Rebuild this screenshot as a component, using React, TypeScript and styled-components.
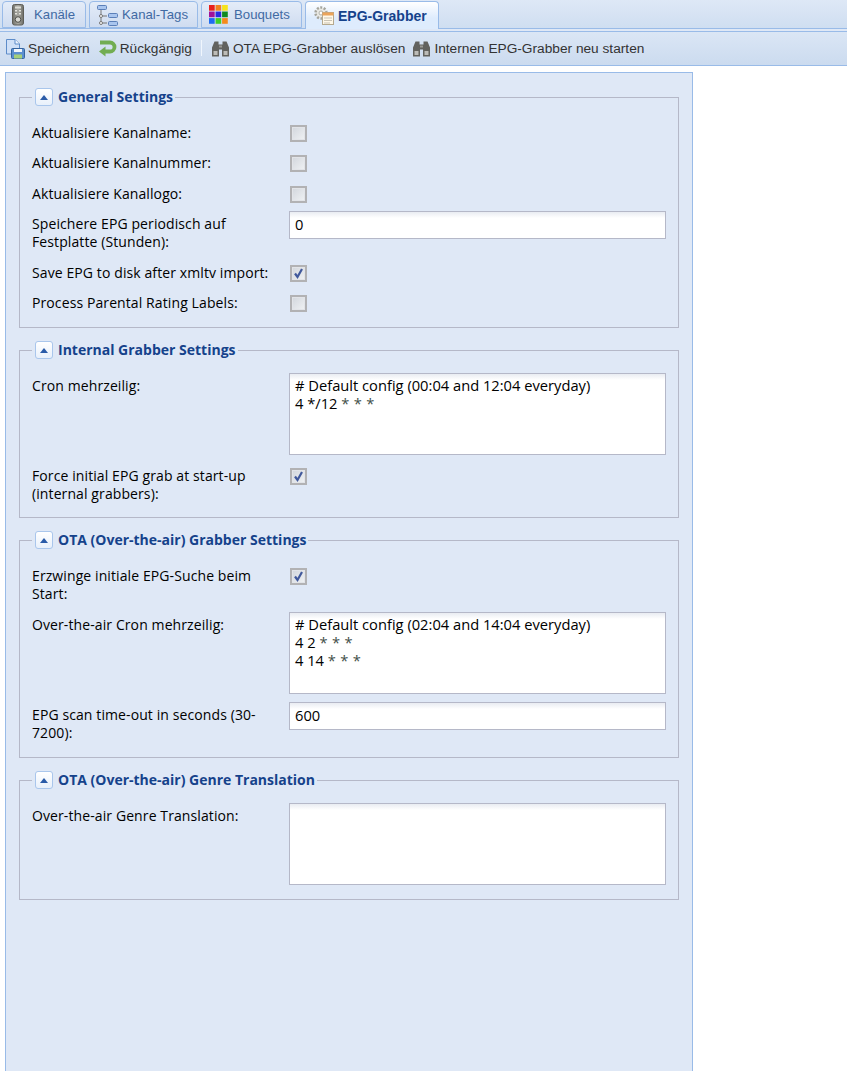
import React from 'react';
import styled, { createGlobalStyle } from 'styled-components';

const Global = createGlobalStyle`
  html, body { margin: 0; padding: 0; background: #fff; }
  body { width: 847px; height: 1071px; overflow: hidden; font-family: "Liberation Sans", Arial, sans-serif; }
`;

const Page = styled.div`
  width: 847px;
  height: 1071px;
  overflow: hidden;
  display: flex;
  flex-direction: column;
`;

const TabBar = styled.div`
  height: 29px;
  box-sizing: border-box;
  padding: 1px 0 0 2px;
  display: flex;
  gap: 3px;
  background: linear-gradient(#dee8f6, #cfdef1);
  border-bottom: 1px solid #99bbe8;
`;

const Tab = styled.div<{ $active?: boolean; $w: number; $gap: number }>`
  width: ${p => p.$w}px;
  height: ${p => (p.$active ? 28 : 27)}px;
  box-sizing: border-box;
  border: 1px solid #99bbe8;
  border-bottom: ${p => (p.$active ? 'none' : '1px solid #99bbe8')};
  border-radius: 4px 4px 0 0;
  background: ${p => (p.$active ? 'linear-gradient(#fff, #deecfd 60%, #deecfd)' : 'linear-gradient(#e4ecf8, #cfdcf0)')};
  display: flex;
  align-items: center;
  gap: ${p => p.$gap}px;
  padding-left: 7px;
  font-size: ${p => (p.$active ? 14 : 13.2)}px;
  font-weight: ${p => (p.$active ? 700 : 400)};
  color: ${p => (p.$active ? '#15428b' : '#416aa3')};
  white-space: nowrap;
`;

const Strip = styled.div`
  height: 2px;
  background: #dfe8f6;
`;

const Toolbar = styled.div`
  height: 35px;
  box-sizing: border-box;
  border-top: 1px solid #99bbe8;
  border-bottom: 1px solid #99bbe8;
  background: linear-gradient(#dbe6f5, #cbdbef);
  display: flex;
  align-items: center;
  padding: 0 0 1px 5px;
  font-size: 13.7px;
  color: #333;
`;

const ToolButton = styled.div<{ $gap?: number }>`
  display: flex;
  align-items: center;
  gap: 3px;
  margin-right: ${p => p.$gap ?? 9}px;
  white-space: nowrap;
`;

const Separator = styled.div`
  width: 1px;
  height: 16px;
  background: #f0f6fd;
  margin-right: 9px;
`;

const Panel = styled.div`
  width: 688px;
  flex: 1;
  margin: 6px 0 0 5px;
  box-sizing: border-box;
  border: 1px solid #99bbe8;
  border-bottom: none;
  background: #dfe8f6;
  padding: 14px 13px 0;
`;

const Fieldset = styled.fieldset`
  margin: 0 0 12px;
  padding: 13px 12px 0 12px;
  border: 1px solid #b5b8c8;
  min-width: 0;
`;

const Legend = styled.legend`
  margin-left: 0;
  padding: 0 2px 0 3px;
  display: flex;
  align-items: center;
  gap: 5px;
  height: 20px;
  font-family: "Open Sans", "Noto Sans", sans-serif;
  font-size: 14px;
  font-weight: 700;
  color: #15428b;
`;

const LegendTitle = styled.span`
  padding-bottom: 2px;
`;

const Toggle = styled.span`
  width: 18px;
  height: 18px;
  box-sizing: border-box;
  border: 1px solid #a9c6ec;
  border-radius: 3px;
  background: linear-gradient(#fff, #e8f0fb);
  display: flex;
  align-items: center;
  justify-content: center;
  &::before {
    content: '';
    border-left: 4.5px solid transparent;
    border-right: 4.5px solid transparent;
    border-bottom: 5px solid #2a5ba8;
  }
`;

const Row = styled.div<{ $mb?: number }>`
  display: grid;
  grid-template-columns: 257px 377px;
  margin-bottom: ${p => p.$mb ?? 7.5}px;
  font-family: "Open Sans", "Noto Sans", sans-serif;
  font-size: 14px;
  line-height: 18px;
  color: #000;
`;

const Label = styled.div`
  padding: 4px 10px 1px 0;
  letter-spacing: 0.1px;
`;

const Check = styled.span`
  display: flex;
  align-items: center;
  justify-content: center;
  width: 17px;
  height: 17px;
  margin: 5px 0 0 1px;
  box-sizing: border-box;
  border: 2px solid #b2b2b4;
  background: linear-gradient(135deg, #d2d6dc, #f0f2f4);
  box-shadow: inset 0 0 0 1px #e2e4e8;
`;

const Field = styled.div<{ $h: number; $single?: boolean }>`
  height: ${p => p.$h}px;
  box-sizing: border-box;
  border: 1px solid #b5b8c8;
  background: linear-gradient(#e9ecf2, #fff 6px);
  padding: ${p => (p.$single ? 3 : 2)}px 5px 2px;
  white-space: pre;
  font-size: 14.7px;
  line-height: 18px;
`;

const Star = styled.span`
  color: #3f4f48;
  letter-spacing: 0.3px;
`;

const RemoteIcon = () => (
  <svg width="16" height="22" viewBox="0 0 16 22">
    <defs>
      <linearGradient id="remote" x1="0" x2="1" y1="0" y2="0">
        <stop offset="0" stopColor="#6e6e68" />
        <stop offset="0.5" stopColor="#a9a9a2" />
        <stop offset="1" stopColor="#6e6e68" />
      </linearGradient>
    </defs>
    <rect x="2.500" y="0.500" width="11" height="20.500" rx="2" fill="url(#remote)" stroke="#5e5e58" />
    <rect x="5" y="2.500" width="6" height="2" fill="#ddddd6" />
    <path d="M5 6h2v1.500H5zM9 6h2v1.500H9zM5 9h2v1.500H5zM9 9h2v1.500H9z" fill="#e4e4dd" />
    <circle cx="8" cy="15.500" r="2.800" fill="#d8d8d2" stroke="#4f4f4a" />
  </svg>
);

const TreeIcon = () => (
  <svg width="21" height="22" viewBox="0 0 21 22">
    <path d="M4 6V19H10M4 12H10" fill="none" stroke="#777" />
    <rect x="0.500" y="1.500" width="9" height="4" rx="1" fill="#a9c5ee" stroke="#5b7fb8" />
    <rect x="11.500" y="9.500" width="9" height="4" rx="1" fill="#a9c5ee" stroke="#5b7fb8" />
    <rect x="11.500" y="17.500" width="9" height="4" rx="1" fill="#a9c5ee" stroke="#5b7fb8" />
    <circle cx="4" cy="12" r="1.500" fill="#fff" stroke="#777" />
    <circle cx="4" cy="19" r="1.500" fill="#fff" stroke="#777" />
  </svg>
);

const BOUQUET_COLORS = ['#e8201c', '#f0821e', '#f5e31a', '#a0129a', '#2a2ce0', '#0f8a20', '#1f6cf0', '#3fd028', '#f58a1c'];

const BouquetIcon = () => (
  <svg width="19" height="19" viewBox="0 0 18 18">
    {BOUQUET_COLORS.map((c, i) => (
      <rect key={c} x={(i % 3) * 6.2} y={Math.floor(i / 3) * 6.2} width="5.400" height="5.400" fill={c} />
    ))}
  </svg>
);

const GearIcon = () => (
  <svg width="22" height="22" viewBox="0 0 22 22">
    <circle cx="8" cy="8" r="5.500" fill="#e9e9e4" stroke="#a5a59d" strokeWidth="2.500" strokeDasharray="2 1.500" />
    <circle cx="8" cy="8" r="2" fill="#fff" stroke="#b0b0a8" />
    <rect x="9.500" y="7.500" width="11" height="12" fill="#fff8e8" stroke="#b5a98e" />
    <rect x="9.500" y="7.500" width="11" height="3" fill="#eba45a" />
    <path d="M11 13h8M11 15.500h8M11 18h6" stroke="#c9c3b5" />
  </svg>
);

const SaveIcon = () => (
  <svg width="20" height="21" viewBox="0 0 20 21">
    <path d="M1.500 1.500H10L14.500 6V16H1.500Z" fill="#cfe0f7" stroke="#5d8cc9" />
    <path d="M10 1.500V6H14.500" fill="#eef5ff" stroke="#5d8cc9" />
    <rect x="6.500" y="10.500" width="13" height="10" rx="1" fill="#5b8fd0" stroke="#35649f" />
    <rect x="9" y="11" width="8" height="3" fill="#f0f5fb" />
    <rect x="9" y="16.500" width="8" height="4" fill="#a6d07a" />
  </svg>
);

const UndoIcon = () => (
  <svg width="19" height="18" viewBox="0 0 19 18">
    <path d="M2 3.500H12A4.500 4.500 0 0 1 12 12.500H6" fill="none" stroke="#72ad52" strokeWidth="3.800" />
    <path d="M7.500 7.500V17.500L1 12.500Z" fill="#72ad52" />
  </svg>
);

const BinocularIcon = () => (
  <svg width="19" height="17" viewBox="0 0 19 17">
    <path d="M3.500 1.500h4v3h4v-3h4l2.500 6v9h-7v-7H8v7H1v-9Z" fill="#62625e" />
    <rect x="2.500" y="11" width="4" height="4" fill="#bcbcb8" />
    <rect x="12.500" y="11" width="4" height="4" fill="#bcbcb8" />
    <rect x="8" y="5.500" width="3" height="2" fill="#9a9a95" />
  </svg>
);

const CheckMark = () => (
  <svg width="13" height="13" viewBox="0 0 13 13">
    <path d="M3 6.500L5.500 10L10 2" fill="none" stroke="#41599c" strokeWidth="2.200" />
  </svg>
);

const Box = ({ checked }: { checked?: boolean }) => <Check>{checked && <CheckMark />}</Check>;

const Stars = () => <Star>* * *</Star>;

export default function App() {
  return (
    <Page>
      <Global />
      <TabBar>
        <Tab $w={84} $gap={8}><RemoteIcon />Kanäle</Tab>
        <Tab $w={109} $gap={4}><TreeIcon />Kanal-Tags</Tab>
        <Tab $w={101} $gap={6}><BouquetIcon />Bouquets</Tab>
        <Tab $w={134} $gap={3} $active><GearIcon />EPG-Grabber</Tab>
      </TabBar>
      <Strip />
      <Toolbar>
        <ToolButton $gap={8}><SaveIcon />Speichern</ToolButton>
        <ToolButton><UndoIcon />Rückgängig</ToolButton>
        <Separator />
        <ToolButton $gap={7}><BinocularIcon />OTA EPG-Grabber auslösen</ToolButton>
        <ToolButton><BinocularIcon />Internen EPG-Grabber neu starten</ToolButton>
      </Toolbar>
      <Panel>
        <Fieldset>
          <Legend><Toggle /><LegendTitle>General Settings</LegendTitle></Legend>
          <Row $mb={7}><Label>Aktualisiere Kanalname:</Label><Box /></Row>
          <Row><Label>Aktualisiere Kanalnummer:</Label><Box /></Row>
          <Row><Label>Aktualisiere Kanallogo:</Label><Box /></Row>
          <Row><Label>Speichere EPG periodisch auf Festplatte (Stunden):</Label><Field $h={28} $single>0</Field></Row>
          <Row><Label>Save EPG to disk after xmltv import:</Label><Box checked /></Row>
          <Row $mb={14}><Label>Process Parental Rating Labels:</Label><Box /></Row>
        </Fieldset>
        <Fieldset>
          <Legend><Toggle /><LegendTitle>Internal Grabber Settings</LegendTitle></Legend>
          <Row $mb={8}>
            <Label>Cron mehrzeilig:</Label>
            <Field $h={82}>
              <div># Default config (00:04 and 12:04 everyday)</div>
              <div>4 */12 <Stars /></div>
            </Field>
          </Row>
          <Row $mb={13}><Label>Force initial EPG grab at start-up (internal grabbers):</Label><Box checked /></Row>
        </Fieldset>
        <Fieldset>
          <Legend><Toggle /><LegendTitle>OTA (Over-the-air) Grabber Settings</LegendTitle></Legend>
          <Row $mb={8}><Label>Erzwinge initiale EPG-Suche beim Start:</Label><Box checked /></Row>
          <Row $mb={8}>
            <Label>Over-the-air Cron mehrzeilig:</Label>
            <Field $h={82}>
              <div># Default config (02:04 and 14:04 everyday)</div>
              <div>4 2 <Stars /></div>
              <div>4 14 <Stars /></div>
            </Field>
          </Row>
          <Row $mb={14}><Label>EPG scan time-out in seconds (30-7200):</Label><Field $h={28} $single>600</Field></Row>
        </Fieldset>
        <Fieldset>
          <Legend><Toggle /><LegendTitle>OTA (Over-the-air) Genre Translation</LegendTitle></Legend>
          <Row $mb={14}><Label>Over-the-air Genre Translation:</Label><Field $h={82} /></Row>
        </Fieldset>
      </Panel>
    </Page>
  );
}
